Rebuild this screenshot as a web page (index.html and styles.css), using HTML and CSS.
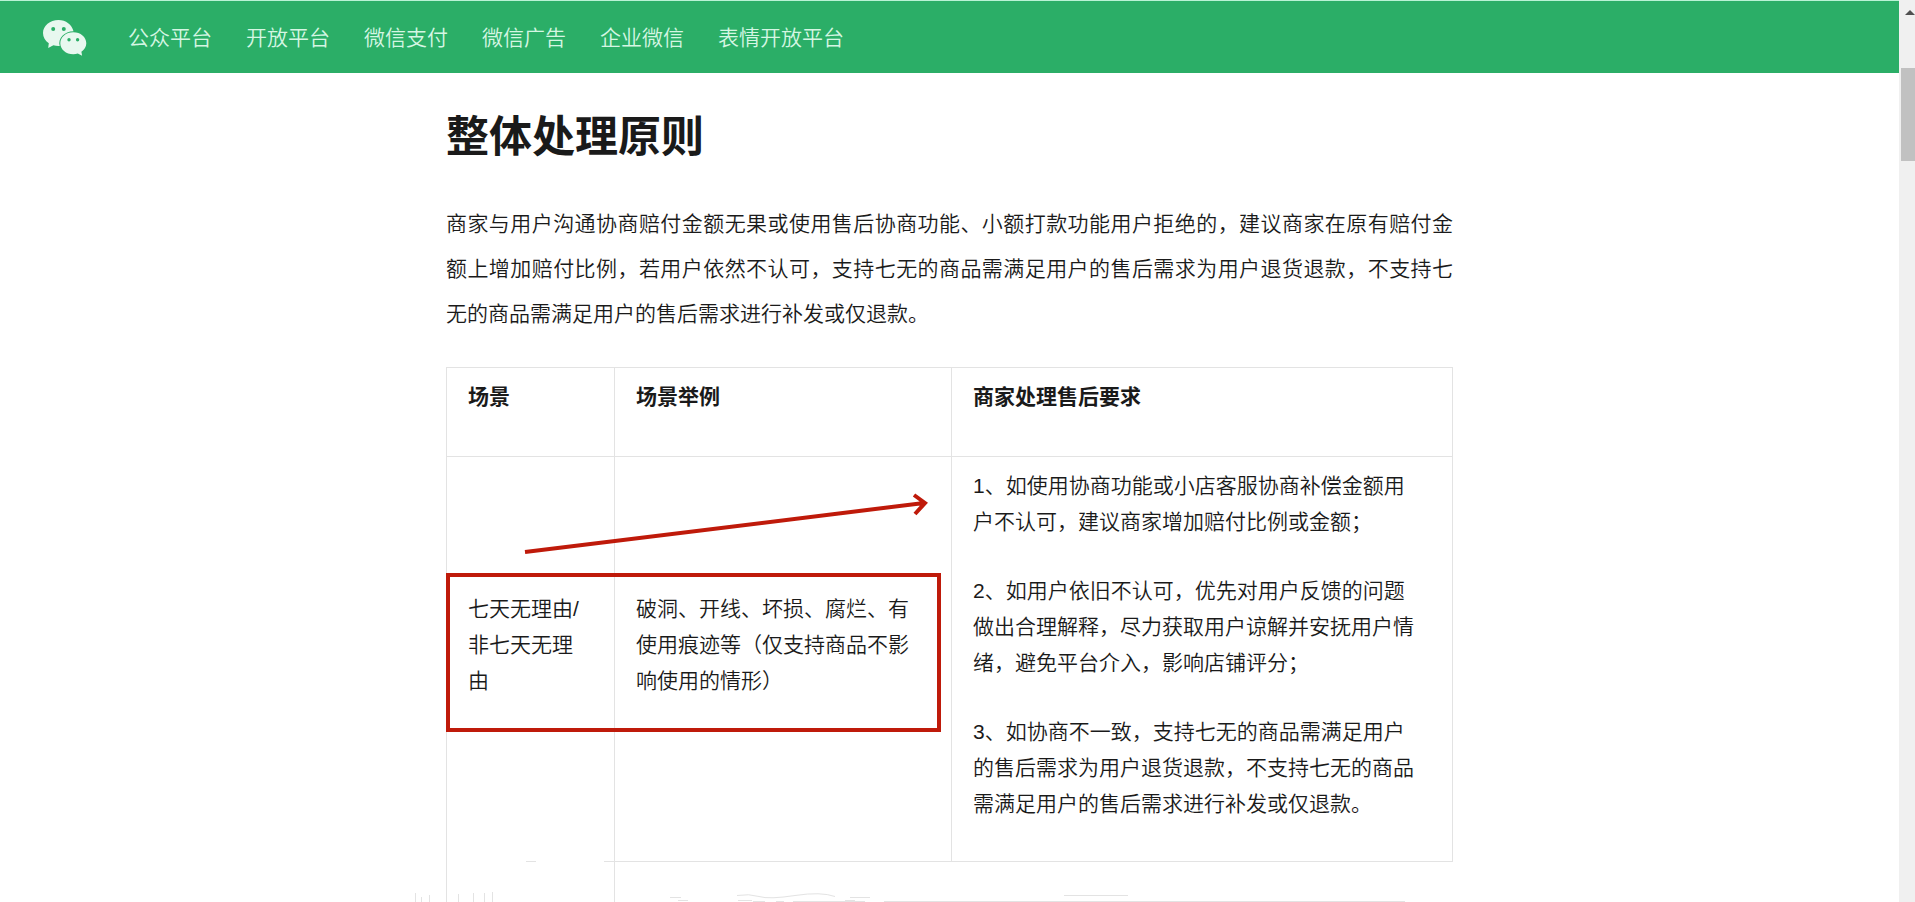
FILE: index.html
```html
<!DOCTYPE html>
<html lang="zh-CN">
<head>
<meta charset="utf-8">
<title>整体处理原则</title>
<link rel="stylesheet" href="styles.css">
</head>
<body>
<div class="page">
  <header class="topbar">
    <a class="logo" href="#" aria-label="微信">
      <svg viewBox="0 0 44 36" width="44" height="36" aria-hidden="true">
        <path class="logo-fill" fill-rule="evenodd" d="M15.500 0C7 0 0 5.700 0 13c0 4.200 2.200 7.700 5.800 10.200L5.200 28l5.200-2.700c1.600.5 3.400.8 5.100.8h1.200C14.600 18.500 21.500 11.300 30.500 11.300C29 4.600 22.800 0 15.500 0zM10.200 7a2 2 0 1 1 0 4 2 2 0 0 1 0-4zM20.800 7a2 2 0 1 1 0 4 2 2 0 0 1 0-4z"/>
        <path class="logo-fill" fill-rule="evenodd" d="M30.300 12.200c-7.300 0-13 4.900-13 11s5.700 11 13 11c1.600 0 3.100-.2 4.500-.7l4.300 2.200-.7-4c3-2 4.900-5 4.900-8.500 0-6.100-5.700-11-13-11zM26 18a1.700 1.700 0 1 1 0 3.400 1.700 1.700 0 0 1 0-3.400zM34.600 18a1.700 1.700 0 1 1 0 3.400 1.700 1.700 0 0 1 0-3.400z"/>
      </svg>
    </a>
    <nav class="nav">
      <a href="#">公众平台</a>
      <a href="#">开放平台</a>
      <a href="#">微信支付</a>
      <a href="#">微信广告</a>
      <a href="#">企业微信</a>
      <a href="#">表情开放平台</a>
    </nav>
  </header>

  <main class="content">
    <h1>整体处理原则</h1>
    <p class="intro">商家与用户沟通协商赔付金额无果或使用售后协商功能、小额打款功能用户拒绝的，建议商家在原有赔付金额上增加赔付比例，若用户依然不认可，支持七无的商品需满足用户的售后需求为用户退货退款，不支持七无的商品需满足用户的售后需求进行补发或仅退款。</p>

    <div class="table-wrap">
      <table class="rules">
        <colgroup><col class="col-scene"><col class="col-example"><col></colgroup>
        <thead>
          <tr><th scope="col">场景</th><th scope="col">场景举例</th><th scope="col">商家处理售后要求</th></tr>
        </thead>
        <tbody>
          <tr>
            <td class="open-bottom">七天无理由/非七天无理由</td>
            <td>破洞、开线、坏损、腐烂、有使用痕迹等（仅支持商品不影响使用的情形）</td>
            <td class="steps">
              <p>1、如使用协商功能或小店客服协商补偿金额用户不认可，建议商家增加赔付比例或金额；</p>
              <p>2、如用户依旧不认可，优先对用户反馈的问题做出合理解释，尽力获取用户谅解并安抚用户情绪，避免平台介入，影响店铺评分；</p>
              <p>3、如协商不一致，支持七无的商品需满足用户的售后需求为用户退货退款，不支持七无的商品需满足用户的售后需求进行补发或仅退款。</p>
            </td>
          </tr>
          <tr class="next-row"><td class="open-top"></td><td class="open-right" colspan="2"></td></tr>
        </tbody>
      </table>
      <svg class="marks" viewBox="0 0 1008 536" width="1008" height="536" aria-hidden="true">
        <path class="arrow" d="M79 185L478 136M468 128L479 136L469 147"/>
        <path class="trace" d="M80 494.500h10M158 494.500h11M618 528.500h64M347 534.500h72M438 534.500h521M291 528.500q12-2 22 1t36-1t40 1M224 530.500h11M232 533.500h10M307 534.500h12M330 534.500h8M292 533.500h14M399 533.500h10M404 530.500h20"/>
        <path class="trace" d="M-30.500 526v10M-24.500 530v6M-16.500 528v8M12.500 527v9M27.500 526v10M38.500 526v10M46.500 525v11"/>
      </svg>
      <div class="highlight"></div>
    </div>
  </main>
</div>
<div class="scrollbar" aria-hidden="true">
  <svg class="scroll-arrow" viewBox="0 0 10 5" width="10" height="5"><path d="M5 0L10 5H0z"/></svg>
  <div class="scroll-thumb"></div>
</div>
</body>
</html>
```
FILE: styles.css
```css
* { box-sizing: border-box; }

body {
  margin: 0;
  height: 100vh;
  display: flex;
  overflow: hidden;
  background: #fff;
  color: #1a1a1a;
  font-family: "Liberation Sans", "Noto Sans CJK SC", sans-serif;
  font-size: 21px;
  font-weight: 350;
}

.page {
  flex: 1;
  min-width: 0;
  overflow: hidden;
}

.topbar {
  display: flex;
  align-items: center;
  gap: 41px;
  height: 73px;
  padding: 2px 0 0 43px;
  background: #2bae67;
  border-top: 1px solid #b9f3d5;
}

.logo { display: block; height: 36px; }
.logo svg { display: block; }
.logo-fill { fill: #e8f8ef; }

.nav { display: flex; gap: 34px; }
.nav a {
  color: #d5f6e3;
  line-height: 30px;
  text-decoration: none;
}

.content {
  width: 100%;
  max-width: 1007px;
  margin: 0 auto;
}

h1 {
  margin: 32px 0;
  font-size: 43px;
  line-height: 64px;
  font-weight: 700;
}

.intro {
  margin: 0 0 31px;
  line-height: 45px;
  text-align: justify;
}

.table-wrap { position: relative; }

.rules {
  width: 100%;
  table-layout: fixed;
  border-collapse: collapse;
  line-height: 36px;
}
.col-scene { width: 168px; }
.col-example { width: 337px; }

.rules th,
.rules td {
  padding: 11px 23px 39px 21px;
  border: 1px solid #e3e3e3;
  text-align: left;
  vertical-align: middle;
}
.rules th {
  padding-bottom: 41px;
  font-weight: 700;
}
.rules .steps { padding-right: 32px; }
.rules p { margin: 0 0 33px; }
.rules p:last-child { margin-bottom: 0; }

.rules .open-bottom { border-bottom: 0; }
.rules .open-top { border-top: 0; }
.rules .open-right { border-right: 0; }
.rules .next-row td {
  height: 80px;
  padding: 0;
}

.marks {
  position: absolute;
  left: 0;
  top: 0;
  overflow: visible;
}
.arrow {
  fill: none;
  stroke: #bf1a0a;
  stroke-width: 4;
}
.trace {
  fill: none;
  stroke: #e3e3e3;
  stroke-width: 1;
}

.highlight {
  position: absolute;
  left: 0;
  top: 206px;
  width: 495px;
  height: 159px;
  border: 4px solid #bf1a0a;
}

.scrollbar {
  flex: none;
  width: 16px;
  padding: 10px 0 0 2px;
  background: #f0f0f0;
  overflow: hidden;
}
.scroll-arrow {
  display: block;
  margin-left: 4px;
  fill: #505050;
}
.scroll-thumb {
  height: 93px;
  margin-top: 53px;
  background: #c1c1c1;
}
```
